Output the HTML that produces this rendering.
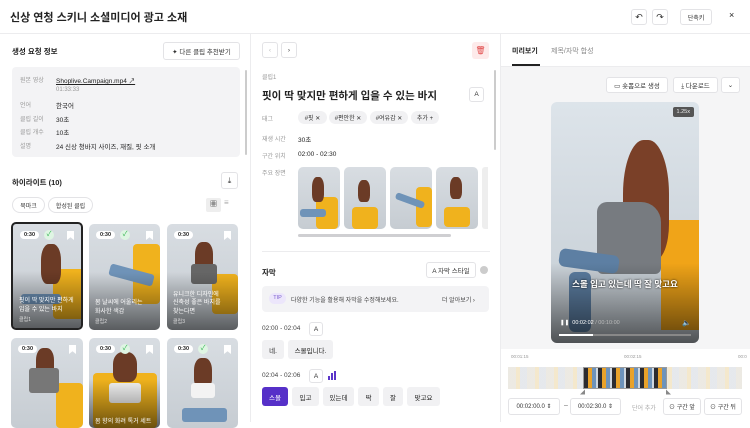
<!DOCTYPE html>
<html><head><meta charset="utf-8"><style>
*{box-sizing:border-box;margin:0;padding:0}
body{width:750px;height:422px;overflow:hidden;background:#fff;font-family:"Liberation Sans","Noto Sans CJK KR",sans-serif;color:#222;position:relative;font-size:7px}
.a{position:absolute}
.btn{position:absolute;border:1px solid #e3e3e6;border-radius:3px;background:#fff;display:flex;align-items:center;justify-content:center;font-size:6.5px;color:#333}
.chip{position:absolute;background:#f1f1f3;border-radius:9px;font-size:6px;display:flex;align-items:center;justify-content:center;color:#333}
.lbl{position:absolute;font-size:6px;color:#999}
.val{position:absolute;font-size:6.5px;color:#222}
.ph{position:absolute;border-radius:5px;overflow:hidden;background:linear-gradient(180deg,#d8dde2,#c6ccd2)}
.ph .ch{position:absolute;background:#f0b21d;border-radius:4px}
.ph .hair{position:absolute;background:#6b3b26;border-radius:40% 40% 30% 30%}
.ph .body{position:absolute;background:#f3f3f3;border-radius:3px}
.ph .leg{position:absolute;background:#6f93b8;border-radius:3px}
.card .shade{position:absolute;left:0;right:0;bottom:0;height:55%;background:linear-gradient(180deg,rgba(0,0,0,0),rgba(0,0,0,.55))}
.tm{position:absolute;top:7px;left:7px;background:#fff;border-radius:6px;font-size:5.5px;padding:1px 4px;font-weight:bold}
.ok{position:absolute;top:6px;left:31px;width:10px;height:10px;border-radius:50%;background:#dff5e3;color:#2bb34a;font-size:7px;line-height:10px;text-align:center}
.bm{position:absolute;top:7px;right:7px;width:7px;height:9px;background:#fff;clip-path:polygon(0 0,100% 0,100% 100%,50% 70%,0 100%)}
.ct{position:absolute;left:6px;bottom:14px;color:#fff;font-size:6px;line-height:8.5px}
.cn{position:absolute;left:6px;bottom:5px;color:#ddd;font-size:5px}
.w{position:absolute;background:#f1f1f3;border-radius:3px;font-size:6.5px;display:flex;align-items:center;justify-content:center;height:19px}
</style></head><body>
<div class="a" style="left:10px;top:9px;font-size:11px;font-weight:bold">신상 연청 스키니 소셜미디어 광고 소재</div>
<div class="btn" style="left:631px;top:9px;width:16px;height:16px;font-size:9px">↶</div>
<div class="btn" style="left:652px;top:9px;width:16px;height:16px;font-size:9px">↷</div>
<div class="btn" style="left:680px;top:9px;width:32px;height:16px;font-size:6px">단축키</div>
<div class="a" style="left:729px;top:10px;font-size:9px">×</div>
<div class="a" style="left:0;top:33px;width:750px;height:1px;background:#ececee"></div>
<div class="a" style="left:250px;top:33px;width:1px;height:389px;background:#ececee"></div>
<div class="a" style="left:500px;top:33px;width:1px;height:389px;background:#ececee"></div>

<div class="a" style="left:12px;top:46px;font-size:7.5px;font-weight:bold">생성 요청 정보</div>
<div class="btn" style="left:163px;top:42px;width:77px;height:18px">✦ 다른 클립 추천받기</div>
<div class="a" style="left:12px;top:67px;width:228px;height:90px;background:#f3f3f5;border-radius:4px"></div>
<div class="lbl" style="left:20px;top:75px">원본 영상</div><div class="val" style="left:56px;top:75px;text-decoration:underline">Shoplive.Campaign.mp4 ↗</div>
<div class="lbl" style="left:56px;top:87px">01:33:33</div>
<div class="lbl" style="left:20px;top:100px">언어</div><div class="val" style="left:56px;top:100px">한국어</div>
<div class="lbl" style="left:20px;top:114px">클립 길이</div><div class="val" style="left:56px;top:114px">30초</div>
<div class="lbl" style="left:20px;top:127px">클립 개수</div><div class="val" style="left:56px;top:127px">10초</div>
<div class="lbl" style="left:20px;top:141px">설명</div><div class="val" style="left:56px;top:141px">24 신상 청바지 사이즈, 재질, 핏 소개</div>
<div class="a" style="left:245px;top:70px;width:2px;height:85px;background:#ccc;border-radius:1px"></div>
<div class="a" style="left:12px;top:177px;font-size:7.5px;font-weight:bold">하이라이트 (10)</div>
<div class="btn" style="left:221px;top:172px;width:17px;height:17px;font-size:8px">⤓</div>
<div class="chip" style="left:12px;top:197px;width:33px;height:16px;background:#fff;border:1px solid #e3e3e6">북마크</div>
<div class="chip" style="left:48px;top:197px;width:45px;height:16px;background:#fff;border:1px solid #e3e3e6">합성된 클립</div>
<div class="a" style="left:206px;top:198px;width:15px;height:14px;background:#eee;border-radius:2px;font-size:7px;text-align:center;line-height:14px">▦</div>
<div class="a" style="left:224px;top:198px;font-size:8px;color:#aaa">≡</div>

<div class="ph card" style="left:11px;top:222px;width:72px;height:108px;border:2px solid #222"><div class="ch" style="left:40px;top:45px;width:32px;height:50px"></div><div class="hair" style="left:28px;top:20px;width:20px;height:40px"></div><div class="leg" style="left:8px;top:70px;width:40px;height:10px"></div><div class="shade"></div><div class="tm">0:30</div><div class="ok">✓</div><div class="bm"></div><div class="ct">핏이 딱 맞지만 편하게<br>입을 수 있는 바지</div><div class="cn">클립1</div></div>
<div class="ph card" style="left:89px;top:224px;width:71px;height:106px"><div class="ch" style="left:44px;top:20px;width:27px;height:60px"></div><div class="leg" style="left:20px;top:45px;width:45px;height:12px;transform:rotate(15deg)"></div><div class="shade"></div><div class="tm">0:30</div><div class="ok">✓</div><div class="bm"></div><div class="ct">봄 날씨에 어울리는<br>화사한 색감</div><div class="cn">클립2</div></div>
<div class="ph card" style="left:167px;top:224px;width:71px;height:106px"><div class="ch" style="left:45px;top:50px;width:26px;height:40px"></div><div class="hair" style="left:28px;top:18px;width:18px;height:30px"></div><div class="body" style="left:24px;top:40px;width:26px;height:20px;background:#666"></div><div class="shade"></div><div class="tm">0:30</div><div class="bm"></div><div class="ct">유니크한 디자인에<br>신축성 좋은 바지를<br>찾는다면</div><div class="cn">클립3</div></div>
<div class="ph card" style="left:11px;top:338px;width:72px;height:90px"><div class="ch" style="left:45px;top:45px;width:27px;height:45px"></div><div class="hair" style="left:25px;top:10px;width:18px;height:30px"></div><div class="body" style="left:18px;top:30px;width:30px;height:25px;background:#777"></div><div class="tm">0:30</div><div class="bm"></div></div>
<div class="ph card" style="left:89px;top:338px;width:71px;height:90px"><div class="ch" style="left:4px;top:35px;width:64px;height:55px"></div><div class="hair" style="left:24px;top:14px;width:24px;height:30px"></div><div class="body" style="left:20px;top:45px;width:32px;height:20px"></div><div class="shade"></div><div class="tm">0:30</div><div class="ok">✓</div><div class="bm"></div><div class="ct" style="bottom:2px">봄 향의 화려 톡거 세트</div></div>
<div class="ph card" style="left:167px;top:338px;width:71px;height:90px"><div class="hair" style="left:27px;top:20px;width:18px;height:30px"></div><div class="body" style="left:24px;top:45px;width:24px;height:15px"></div><div class="leg" style="left:15px;top:70px;width:45px;height:14px"></div><div class="tm">0:30</div><div class="ok">✓</div><div class="bm"></div></div>

<div class="btn" style="left:262px;top:42px;width:16px;height:16px;color:#bbb">‹</div>
<div class="btn" style="left:281px;top:42px;width:16px;height:16px">›</div>
<div class="a" style="left:472px;top:42px;width:17px;height:17px;background:#fdeaea;border-radius:3px;color:#e04848;font-size:8px;text-align:center;line-height:17px">🗑</div>
<div class="lbl" style="left:262px;top:72px">클립1</div>
<div class="a" style="left:262px;top:88px;font-size:10.5px;font-weight:bold">핏이 딱 맞지만 편하게 입을 수 있는 바지</div>
<div class="btn" style="left:469px;top:87px;width:15px;height:15px">A</div>
<div class="lbl" style="left:262px;top:114px">태그</div>
<div class="chip" style="left:298px;top:111px;width:29px;height:13px">#핏 ✕</div>
<div class="chip" style="left:329px;top:111px;width:38px;height:13px">#편안한 ✕</div>
<div class="chip" style="left:370px;top:111px;width:38px;height:13px">#여유감 ✕</div>
<div class="chip" style="left:411px;top:111px;width:28px;height:13px">추가 +</div>
<div class="lbl" style="left:262px;top:134px">재생 시간</div><div class="val" style="left:298px;top:134px">30초</div>
<div class="lbl" style="left:262px;top:151px">구간 위치</div><div class="val" style="left:298px;top:151px">02:00 - 02:30</div>
<div class="lbl" style="left:262px;top:168px">주요 장면</div>
<div class="ph" style="left:298px;top:167px;width:42px;height:62px"><div class="ch" style="left:18px;top:30px;width:22px;height:32px"></div><div class="hair" style="left:14px;top:10px;width:12px;height:25px"></div><div class="leg" style="left:2px;top:42px;width:26px;height:8px"></div></div>
<div class="ph" style="left:344px;top:167px;width:42px;height:62px"><div class="ch" style="left:8px;top:40px;width:26px;height:22px"></div><div class="hair" style="left:14px;top:13px;width:12px;height:22px"></div></div>
<div class="ph" style="left:390px;top:167px;width:42px;height:62px"><div class="ch" style="left:26px;top:20px;width:16px;height:40px"></div><div class="leg" style="left:5px;top:30px;width:30px;height:7px;transform:rotate(20deg)"></div></div>
<div class="ph" style="left:436px;top:167px;width:42px;height:62px"><div class="ch" style="left:8px;top:40px;width:26px;height:20px"></div><div class="hair" style="left:14px;top:10px;width:12px;height:22px"></div></div>
<div class="a" style="left:482px;top:167px;width:6px;height:62px;background:#eee;border-radius:3px 0 0 3px"></div>
<div class="a" style="left:298px;top:234px;width:153px;height:3px;background:#cfcfd2;border-radius:2px"></div>
<div class="a" style="left:494px;top:70px;width:2px;height:80px;background:#ccc;border-radius:1px"></div>
<div class="a" style="left:262px;top:251px;width:228px;height:1px;background:#ececee"></div>
<div class="a" style="left:262px;top:267px;font-size:7.5px;font-weight:bold">자막</div>
<div class="btn" style="left:426px;top:262px;width:50px;height:16px">A 자막 스타일</div>
<div class="a" style="left:480px;top:266px;width:8px;height:8px;border-radius:50%;background:#ccc"></div>
<div class="a" style="left:262px;top:286px;width:227px;height:26px;background:#f3f3f5;border-radius:4px"></div>
<div class="a" style="left:269px;top:293px;width:17px;height:11px;border-radius:6px;background:#ece6fb;color:#7a5ccf;font-size:5.5px;text-align:center;line-height:11px">TIP</div>
<div class="a" style="left:291px;top:295px;font-size:6px;color:#444">다양한 기능을 활용해 자막을 수정해보세요.</div>
<div class="a" style="left:442px;top:295px;font-size:6px;color:#444">더 알아보기 ›</div>
<div class="a" style="left:262px;top:325px;font-size:6.5px;color:#444">02:00 - 02:04</div>
<div class="btn" style="left:309px;top:322px;width:14px;height:14px">A</div>
<div class="w" style="left:262px;top:340px;width:22px">네.</div>
<div class="w" style="left:288px;top:340px;width:45px">스몰입니다.</div>
<div class="a" style="left:262px;top:372px;font-size:6.5px;color:#444">02:04 - 02:06</div>
<div class="btn" style="left:309px;top:369px;width:14px;height:14px">A</div>
<div class="a" style="left:328px;top:376px;width:2px;height:4px;background:#5b35c9"></div>
<div class="a" style="left:331px;top:373px;width:2px;height:7px;background:#5b35c9"></div>
<div class="a" style="left:334px;top:371px;width:2px;height:9px;background:#5b35c9"></div>
<div class="w" style="left:262px;top:387px;width:26px;background:#5630c8;color:#fff">스몰</div>
<div class="w" style="left:292px;top:387px;width:27px">입고</div>
<div class="w" style="left:323px;top:387px;width:31px">있는데</div>
<div class="w" style="left:358px;top:387px;width:21px">딱</div>
<div class="w" style="left:383px;top:387px;width:20px">잘</div>
<div class="w" style="left:407px;top:387px;width:33px">맞고요</div>

<div class="a" style="left:512px;top:46px;font-size:7px;font-weight:bold">미리보기</div>
<div class="a" style="left:551px;top:46px;font-size:7px;color:#888">제목/자막 합성</div>
<div class="a" style="left:512px;top:64px;width:28px;height:2px;background:#222"></div>
<div class="a" style="left:501px;top:66px;width:249px;height:356px;background:#f5f5f6;border-top:1px solid #ececee"></div>
<div class="btn" style="left:606px;top:77px;width:62px;height:16px">▭ 숏폼으로 생성</div>
<div class="btn" style="left:673px;top:77px;width:45px;height:16px">⤓ 다운로드</div>
<div class="btn" style="left:721px;top:77px;width:19px;height:16px">⌄</div>
<div class="a" style="left:551px;top:102px;width:148px;height:241px;border-radius:6px;overflow:hidden;background:linear-gradient(180deg,#dde4ea,#c4ccd3)">
 <div class="a" style="left:110px;top:118px;width:38px;height:110px;background:#f0a418;border-radius:8px 0 0 0"></div>
 <div class="a" style="left:72px;top:38px;width:46px;height:120px;background:#7a4028;border-radius:45% 45% 30% 30%"></div>
 <div class="a" style="left:46px;top:100px;width:64px;height:72px;background:#777b80;border-radius:10px 20px 6px 6px"></div>
 <div class="a" style="left:8px;top:150px;width:60px;height:18px;background:#5d7fa3;border-radius:6px;transform:rotate(8deg)"></div>
 <div class="a" style="left:18px;top:170px;width:22px;height:60px;background:#5d7fa3;border-radius:6px"></div>
 <div class="a" style="left:0;bottom:0;width:148px;height:80px;background:linear-gradient(180deg,rgba(0,0,0,0),rgba(0,0,0,.6))"></div>
 <div class="a" style="right:5px;top:5px;background:#555;color:#eee;font-size:5.5px;padding:2px 4px;border-radius:2px">1.25x</div>
 <div class="a" style="left:0;width:148px;top:176px;text-align:center;color:#fff;font-size:8.5px;font-weight:bold;text-shadow:0 0 2px #000">스몰 입고 있는데 딱 잘 맞고요</div>
 <div class="a" style="left:9px;top:218px;color:#fff;font-size:5.5px">❚❚ &nbsp;00:02:02 <span style="color:#bbb">/ 00:10:00</span></div>
 <div class="a" style="right:8px;top:217px;color:#fff;font-size:7px">🔈</div>
 <div class="a" style="left:8px;top:232px;width:132px;height:2px;background:#888"></div>
 <div class="a" style="left:8px;top:232px;width:34px;height:2px;background:#fff"></div>
</div>
<div class="a" style="left:501px;top:349px;width:249px;height:73px;background:#fff"></div>
<div class="a" style="left:511px;top:354px;font-size:4.5px;color:#999">00:01:15</div>
<div class="a" style="left:624px;top:354px;font-size:4.5px;color:#999">00:02:15</div>
<div class="a" style="left:738px;top:354px;font-size:4.5px;color:#999">00:0</div>
<div class="a" style="left:508px;top:367px;width:234px;height:22px;background:repeating-linear-gradient(90deg,#e8e4dc 0 8px,#f1e2c0 8px 12px,#dfe3e8 12px 19px);opacity:.8"></div>
<div class="a" style="left:583px;top:367px;width:84px;height:22px;background:repeating-linear-gradient(90deg,#2b2b30 0 4px,#e9a22a 4px 8px,#6d93bb 8px 12px,#cfd7df 12px 14px);border:1px solid #999"></div>
<div class="a" style="left:580px;top:389px;font-size:5px;color:#888">◢</div>
<div class="a" style="left:666px;top:389px;font-size:5px;color:#888">◣</div>
<div class="btn" style="left:508px;top:398px;width:52px;height:17px;font-size:6px">00:02:00.0 ⇕</div>
<div class="a" style="left:564px;top:402px;font-size:7px;color:#666">–</div>
<div class="btn" style="left:570px;top:398px;width:51px;height:17px;font-size:6px">00:02:30.0 ⇕</div>
<div class="a" style="left:632px;top:403px;font-size:6px;color:#aaa">단어 추가</div>
<div class="btn" style="left:663px;top:398px;width:38px;height:17px;font-size:6px">⊙ 구간 앞</div>
<div class="btn" style="left:704px;top:398px;width:38px;height:17px;font-size:6px">⊙ 구간 뒤</div>
</body></html>
